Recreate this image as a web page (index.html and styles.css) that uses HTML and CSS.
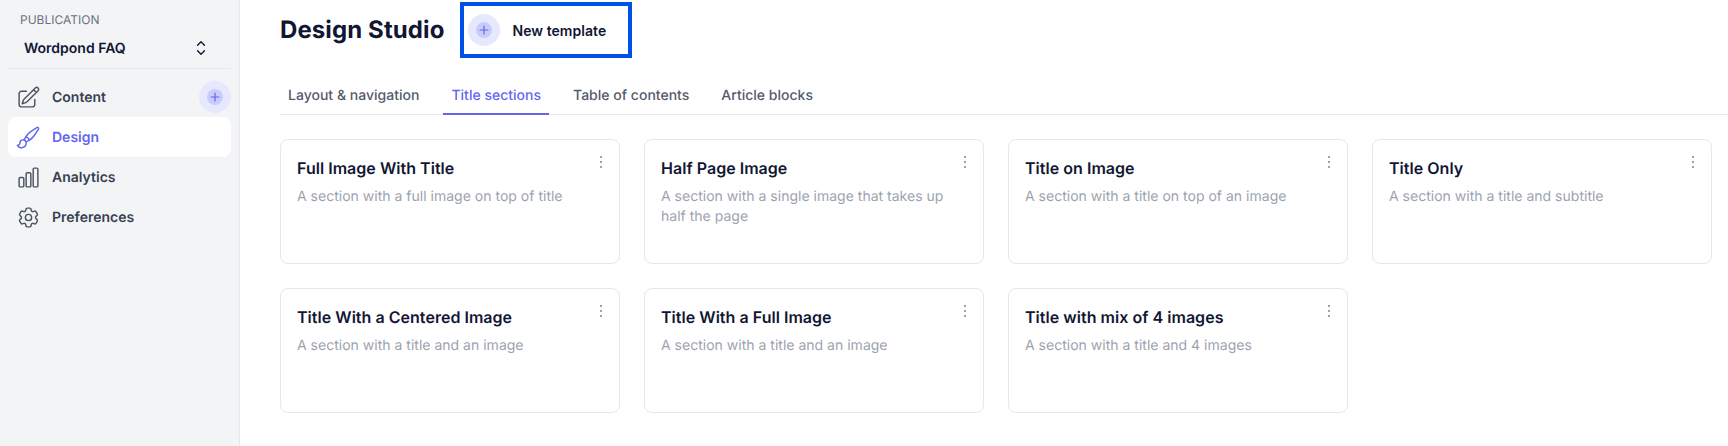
FILE: index.html
```html
<!DOCTYPE html>
<html lang="en">
<head>
  <meta charset="UTF-8">
  <meta name="viewport" content="width=device-width, initial-scale=1.0">
  <title>Design Studio</title>
  <link rel="stylesheet" href="styles.css">
</head>
<body>
  <div class="app">
    <aside class="sidebar">
      <div class="pub-label">PUBLICATION</div>
      <div class="pub-select">
        <span>Wordpond FAQ</span>
        <svg class="chevrons" viewBox="0 0 24 24"><path d="M8.25 9 12 5.25 15.75 9M8.25 15 12 18.75 15.75 15"/></svg>
      </div>
      <nav class="nav">
        <a class="nav-item">
          <svg class="nav-icon" viewBox="0 0 24 24"><path d="m16.862 4.487 1.687-1.688a1.875 1.875 0 1 1 2.652 2.652L10.582 16.07a4.5 4.5 0 0 1-1.897 1.13L6 18l.8-2.685a4.5 4.5 0 0 1 1.13-1.897l8.932-8.931Zm0 0L19.5 7.125M18 14v4.75A2.25 2.25 0 0 1 15.75 21H5.25A2.25 2.25 0 0 1 3 18.75V8.25A2.25 2.25 0 0 1 5.25 6H10"/></svg>
          <span>Content</span>
          <span class="plus-btn nav-plus"><span class="plus-inner"><svg viewBox="0 0 12 12"><path d="M6 2v8M2 6h8"/></svg></span></span>
        </a>
        <a class="nav-item active">
          <svg class="nav-icon" viewBox="0 0 24 24"><path d="M9.53 16.122a3 3 0 0 0-5.78 1.128 2.25 2.25 0 0 1-2.4 2.245 4.5 4.5 0 0 0 8.4-2.245c0-.399-.078-.78-.22-1.128Zm0 0a15.998 15.998 0 0 0 3.388-1.62m-5.043-.025a15.994 15.994 0 0 1 1.622-3.395m3.42 3.42a15.995 15.995 0 0 0 4.764-4.648l3.876-5.814a1.151 1.151 0 0 0-1.597-1.597L14.146 6.32a15.996 15.996 0 0 0-4.649 4.763m3.42 3.42a6.776 6.776 0 0 0-3.42-3.42"/></svg>
          <span>Design</span>
        </a>
        <a class="nav-item">
          <svg class="nav-icon" viewBox="0 0 24 24"><path d="M3 13.125C3 12.504 3.504 12 4.125 12h2.25c.621 0 1.125.504 1.125 1.125v6.75C7.5 20.496 6.996 21 6.375 21h-2.25A1.125 1.125 0 0 1 3 19.875v-6.75ZM9.75 8.625c0-.621.504-1.125 1.125-1.125h2.25c.621 0 1.125.504 1.125 1.125v11.25c0 .621-.504 1.125-1.125 1.125h-2.25a1.125 1.125 0 0 1-1.125-1.125V8.625ZM16.5 4.125c0-.621.504-1.125 1.125-1.125h2.25C20.496 3 21 3.504 21 4.125v15.75c0 .621-.504 1.125-1.125 1.125h-2.25a1.125 1.125 0 0 1-1.125-1.125V4.125Z"/></svg>
          <span>Analytics</span>
        </a>
        <a class="nav-item">
          <svg class="nav-icon" viewBox="0 0 24 24"><path d="M9.594 3.94c.09-.542.56-.94 1.11-.94h2.593c.55 0 1.02.398 1.11.94l.213 1.281c.063.374.313.686.645.87.074.04.147.083.22.127.325.196.72.257 1.075.124l1.217-.456a1.125 1.125 0 0 1 1.37.49l1.296 2.247a1.125 1.125 0 0 1-.26 1.431l-1.003.827c-.293.241-.438.613-.43.992a7.723 7.723 0 0 1 0 .255c-.008.378.137.75.43.991l1.004.827c.424.35.534.955.26 1.43l-1.298 2.247a1.125 1.125 0 0 1-1.369.491l-1.217-.456c-.355-.133-.75-.072-1.076.124a6.47 6.47 0 0 1-.22.128c-.331.183-.581.495-.644.869l-.213 1.281c-.09.543-.56.94-1.11.94h-2.594c-.55 0-1.019-.398-1.11-.94l-.213-1.281c-.062-.374-.312-.686-.644-.87a6.52 6.52 0 0 1-.22-.127c-.325-.196-.72-.257-1.076-.124l-1.217.456a1.125 1.125 0 0 1-1.369-.49l-1.297-2.247a1.125 1.125 0 0 1 .26-1.431l1.004-.827c.292-.24.437-.613.43-.991a6.932 6.932 0 0 1 0-.255c.007-.38-.138-.751-.43-.992l-1.004-.827a1.125 1.125 0 0 1-.26-1.43l1.297-2.247a1.125 1.125 0 0 1 1.37-.491l1.216.456c.356.133.751.072 1.076-.124.072-.044.146-.086.22-.128.332-.183.582-.495.644-.869l.214-1.28Z"/><path d="M15 12a3 3 0 1 1-6 0 3 3 0 0 1 6 0Z"/></svg>
          <span>Preferences</span>
        </a>
      </nav>
    </aside>

    <main class="main">
      <header class="header">
        <h1>Design Studio</h1>
        <button class="new-btn">
          <span class="plus-btn"><span class="plus-inner"><svg viewBox="0 0 12 12"><path d="M6 2v8M2 6h8"/></svg></span></span>
          <span>New template</span>
        </button>
      </header>

      <div class="tabs">
        <a class="tab">Layout &amp; navigation</a>
        <a class="tab active">Title sections</a>
        <a class="tab">Table of contents</a>
        <a class="tab">Article blocks</a>
      </div>

      <div class="grid">
        <div class="card">
          <svg class="dots" viewBox="0 0 4 16"><circle cx="2" cy="3" r="1"/><circle cx="2" cy="8" r="1"/><circle cx="2" cy="13" r="1"/></svg>
          <h3>Full Image With Title</h3>
          <p>A section with a full image on top of title</p>
        </div>
        <div class="card">
          <svg class="dots" viewBox="0 0 4 16"><circle cx="2" cy="3" r="1"/><circle cx="2" cy="8" r="1"/><circle cx="2" cy="13" r="1"/></svg>
          <h3>Half Page Image</h3>
          <p>A section with a single image that takes up half the page</p>
        </div>
        <div class="card">
          <svg class="dots" viewBox="0 0 4 16"><circle cx="2" cy="3" r="1"/><circle cx="2" cy="8" r="1"/><circle cx="2" cy="13" r="1"/></svg>
          <h3>Title on Image</h3>
          <p>A section with a title on top of an image</p>
        </div>
        <div class="card">
          <svg class="dots" viewBox="0 0 4 16"><circle cx="2" cy="3" r="1"/><circle cx="2" cy="8" r="1"/><circle cx="2" cy="13" r="1"/></svg>
          <h3>Title Only</h3>
          <p>A section with a title and subtitle</p>
        </div>
        <div class="card">
          <svg class="dots" viewBox="0 0 4 16"><circle cx="2" cy="3" r="1"/><circle cx="2" cy="8" r="1"/><circle cx="2" cy="13" r="1"/></svg>
          <h3>Title With a Centered Image</h3>
          <p>A section with a title and an image</p>
        </div>
        <div class="card">
          <svg class="dots" viewBox="0 0 4 16"><circle cx="2" cy="3" r="1"/><circle cx="2" cy="8" r="1"/><circle cx="2" cy="13" r="1"/></svg>
          <h3>Title With a Full Image</h3>
          <p>A section with a title and an image</p>
        </div>
        <div class="card">
          <svg class="dots" viewBox="0 0 4 16"><circle cx="2" cy="3" r="1"/><circle cx="2" cy="8" r="1"/><circle cx="2" cy="13" r="1"/></svg>
          <h3>Title with mix of 4 images</h3>
          <p>A section with a title and 4 images</p>
        </div>
      </div>
    </main>
  </div>
</body>
</html>
```

FILE: styles.css
```css
* {
  box-sizing: border-box;
}
html, body {
  height: 100%;
}
body {
  margin: 0;
  font-family: Inter, "Noto Sans", sans-serif;
  text-rendering: geometricPrecision;
  background-color: #fff;
  color: #111633;
  overflow: hidden;
}
.app {
  display: flex;
  height: 100%;
}

/* sidebar */
.sidebar {
  width: 240px;
  flex-shrink: 0;
  padding: 12px 8px 0;
  background-color: #f3f4f6;
  border-right: 1px solid #e5e7eb;
}
.pub-label {
  padding-left: 12px;
  font-size: 12px;
  line-height: 16px;
  color: #6b7280;
}
.pub-select {
  display: flex;
  align-items: center;
  justify-content: space-between;
  height: 41px;
  padding: 0 19px 0 16px;
  border-bottom: 1px solid #e5e7eb;
  font-size: 14px;
  font-weight: 600;
}
.chevrons {
  width: 22px;
  height: 22px;
  fill: none;
  stroke: #111633;
  stroke-width: 1.5;
  stroke-linecap: round;
  stroke-linejoin: round;
}
.nav {
  display: flex;
  flex-direction: column;
  margin-top: 8px;
}
.nav-item {
  display: flex;
  align-items: center;
  gap: 11px;
  height: 40px;
  padding-left: 8px;
  border-radius: 8px;
  font-size: 14px;
  font-weight: 600;
  color: #374151;
}
.nav-item.active {
  background-color: #fff;
  color: #6366f1;
}
.nav-icon {
  width: 25px;
  height: 25px;
  flex-shrink: 0;
  fill: none;
  stroke: #4b5563;
  stroke-width: 1.4;
  stroke-linecap: round;
  stroke-linejoin: round;
}
.nav-item.active .nav-icon {
  stroke: #6366f1;
}
.nav-plus {
  margin-left: auto;
}

/* round plus button */
.plus-btn {
  display: flex;
  align-items: center;
  justify-content: center;
  width: 32px;
  height: 32px;
  border-radius: 50%;
  background-color: #e6e8fd;
}
.plus-inner {
  display: flex;
  align-items: center;
  justify-content: center;
  width: 16px;
  height: 16px;
  border-radius: 50%;
  background-color: #c9ccf9;
}
.plus-inner svg {
  width: 12px;
  height: 12px;
  fill: none;
  stroke: #6366f1;
  stroke-width: 1.2;
  stroke-linecap: round;
}

/* main */
.main {
  flex: 1;
  min-width: 0;
  padding: 2px 16px 0 40px;
}
.header {
  display: flex;
  align-items: center;
  gap: 16px;
}
h1 {
  margin: 0;
  font-size: 24px;
  line-height: 32px;
  font-weight: 700;
  letter-spacing: 0.1px;
}
.new-btn {
  display: flex;
  align-items: center;
  gap: 12px;
  width: 172px;
  height: 56px;
  padding: 0 0 0 4px;
  border: 4px solid #0050e6;
  background: none;
  font-family: inherit;
  font-size: 14px;
  font-weight: 600;
  letter-spacing: 0.05px;
  color: #111633;
}
.tabs {
  display: flex;
  gap: 16px;
  margin-top: 18px;
  margin-right: -16px;
  border-bottom: 1px solid #e5e7eb;
}
.tab {
  padding: 10px 8px 7px;
  margin-bottom: -1px;
  border-bottom: 2px solid transparent;
  font-size: 14px;
  line-height: 20px;
  font-weight: 500;
  letter-spacing: 0.01px;
  color: #535a6b;
}
.tab.active {
  color: #6366f1;
  border-bottom-color: #6366f1;
}
.grid {
  display: grid;
  grid-template-columns: repeat(4, 1fr);
  grid-auto-rows: 125px;
  gap: 24px;
  margin-top: 24px;
}
.card {
  position: relative;
  padding: 16px;
  border: 1px solid #e5e7eb;
  border-radius: 8px;
  background-color: #fff;
}
.card h3 {
  margin: 0 0 7px;
  font-size: 16px;
  line-height: 24px;
  font-weight: 600;
  letter-spacing: 0.03px;
}
.card p {
  margin: 0;
  font-size: 14px;
  line-height: 20px;
  letter-spacing: 0.01px;
  color: #9ca3af;
}
.dots {
  position: absolute;
  top: 14px;
  right: 16px;
  width: 4px;
  height: 16px;
  fill: #7d8290;
}
```
